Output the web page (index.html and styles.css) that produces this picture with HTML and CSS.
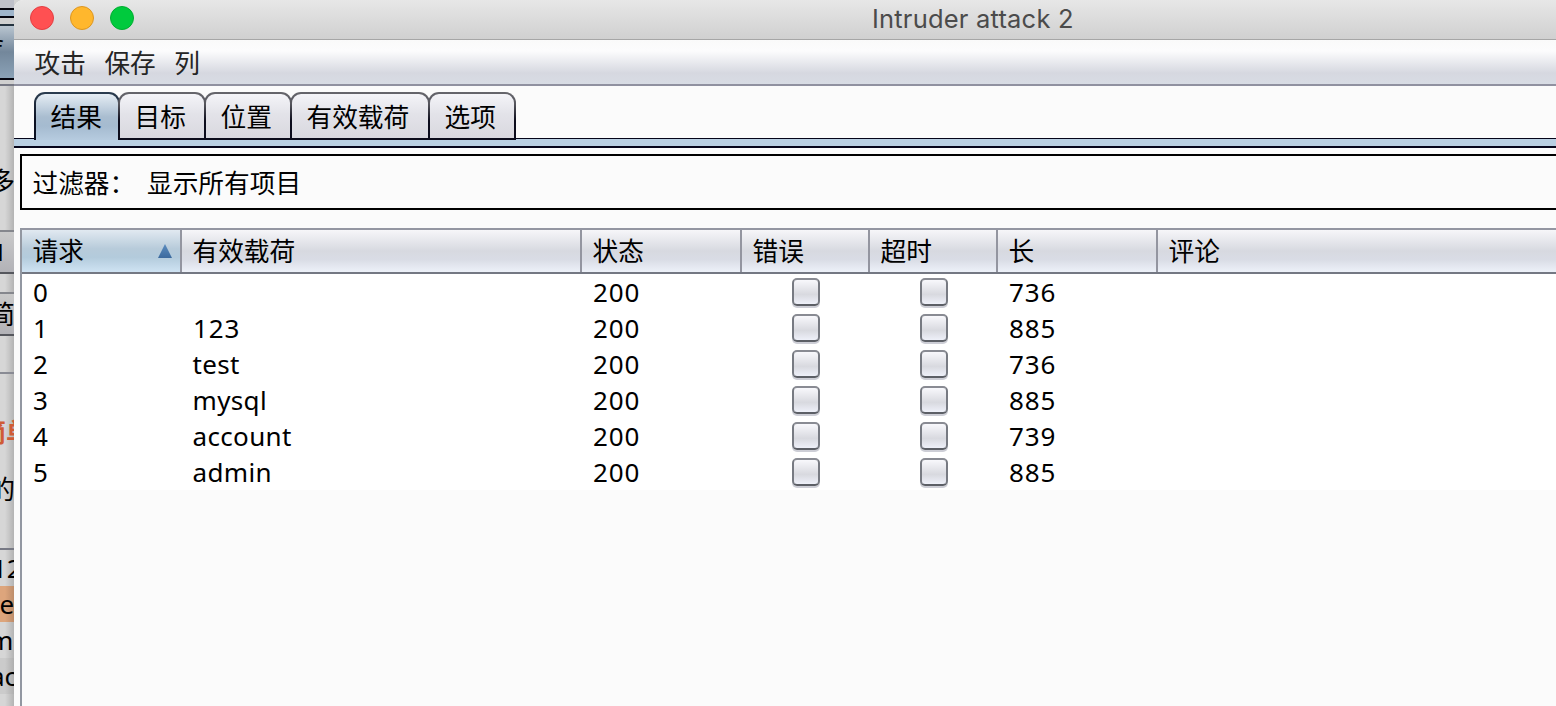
FILE: index.html
```html
<!DOCTYPE html>
<html lang="zh-CN">
<head>
<meta charset="utf-8">
<title>Intruder attack 2</title>
<link rel="stylesheet" href="styles.css">
</head>
<body>
<div class="desktop">
  <aside class="behind">
    <div class="b-top"></div>
    <div class="b-tab"><span>f</span></div>
    <div class="b-edge"></div>
    <div class="b-text b-more"><span>多</span></div>
    <div class="b-button b-one"><span>1</span></div>
    <div class="b-gap"></div>
    <div class="b-button b-simple"><span>简</span></div>
    <div class="b-space"></div>
    <div class="b-text b-heading"><span>简单</span></div>
    <div class="b-text b-de"><span>的</span></div>
    <div class="b-item b-i1"><span>12</span></div>
    <div class="b-item b-i2"><span>te</span></div>
    <div class="b-item b-i3"><span>m</span></div>
    <div class="b-item b-i4"><span>ac</span></div>
  </aside>
  <main class="window">
    <header class="titlebar">
      <div class="lights"><i class="light red"></i><i class="light yellow"></i><i class="light green"></i></div>
      <h1 class="title">Intruder attack 2</h1>
    </header>
    <nav class="menu"><span>攻击</span><span>保存</span><span>列</span></nav>
    <div class="tabs">
      <div class="tab active">结果</div>
      <div class="tab">目标</div>
      <div class="tab">位置</div>
      <div class="tab wide">有效载荷</div>
      <div class="tab">选项</div>
    </div>
    <div class="band"></div>
    <section class="filter"><span class="filter-label">过滤器：</span><span>显示所有项目</span></section>
    <section class="table">
      <div class="row head">
        <div class="cell sorted">请求<svg class="arrow" width="14" height="14" viewBox="0 0 14 14"><defs><linearGradient id="g" x1="0" y1="0" x2="0" y2="1"><stop offset="0" stop-color="#5b8cbf"/><stop offset="1" stop-color="#3c6a9e"/></linearGradient></defs><path d="M7 0L14 14H0Z" fill="url(#g)"/></svg></div>
        <div class="cell">有效载荷</div><div class="cell">状态</div><div class="cell">错误</div><div class="cell">超时</div><div class="cell">长</div><div class="cell">评论</div>
      </div>
      <div class="row"><div class="cell">0</div><div class="cell"></div><div class="cell">200</div><div class="cell check"><i class="box"></i></div><div class="cell check"><i class="box"></i></div><div class="cell">736</div><div class="cell"></div></div>
      <div class="row"><div class="cell">1</div><div class="cell">123</div><div class="cell">200</div><div class="cell check"><i class="box"></i></div><div class="cell check"><i class="box"></i></div><div class="cell">885</div><div class="cell"></div></div>
      <div class="row"><div class="cell">2</div><div class="cell word">test</div><div class="cell">200</div><div class="cell check"><i class="box"></i></div><div class="cell check"><i class="box"></i></div><div class="cell">736</div><div class="cell"></div></div>
      <div class="row"><div class="cell">3</div><div class="cell word">mysql</div><div class="cell">200</div><div class="cell check"><i class="box"></i></div><div class="cell check"><i class="box"></i></div><div class="cell">885</div><div class="cell"></div></div>
      <div class="row"><div class="cell">4</div><div class="cell word">account</div><div class="cell">200</div><div class="cell check"><i class="box"></i></div><div class="cell check"><i class="box"></i></div><div class="cell">739</div><div class="cell"></div></div>
      <div class="row"><div class="cell">5</div><div class="cell word">admin</div><div class="cell">200</div><div class="cell check"><i class="box"></i></div><div class="cell check"><i class="box"></i></div><div class="cell">885</div><div class="cell"></div></div>
    </section>
  </main>
</div>
</body>
</html>
```
FILE: styles.css
```css
* { box-sizing: border-box; }
body {
  margin: 0;
  overflow: hidden;
  font-family: "Noto Sans", "Noto Sans CJK SC", sans-serif;
  font-size: 26px;
  color: #000;
}
.desktop { display: flex; width: 1556px; height: 706px; background: #d3d3d3; }

/* Window behind, only its left sliver shows */
.behind {
  width: 14px;
  height: 706px;
  overflow: hidden;
  flex: none;
  background: linear-gradient(to right, transparent 5px, rgba(0,0,0,.16)), #d6d6d6;
}
.behind > div { display: flex; align-items: center; overflow: hidden; white-space: nowrap; }
.behind span { flex: none; line-height: 36px; }
.b-top {
  height: 26px;
  background: linear-gradient(#bfc1ca 0 8px, #05050f 8px 10px, #9fb5cb 10px 16px, #05050f 16px 18px, #d0d0d0 18px 24px, #25333f 24px 26px);
}
.b-tab { height: 52px; background: linear-gradient(#b9c5d0, #73879b 50%, #8ba2b7); }
.b-tab span { margin: -6px 0 0 -7px; }
.b-edge { height: 8px; background: linear-gradient(#05050f 0 2px, #d0d0d0 2px 6px, #777985 6px); }
.b-more { height: 144px; padding-top: 46px; }
.b-more span { margin-left: -11px; }
.b-button { height: 44px; background: linear-gradient(#cacaca, #b2b2b7); border-top: 2px solid #85878d; border-bottom: 2px solid #55575d; }
.b-one span { margin-left: -7px; font-size: 24px; }
.b-gap { height: 18px; }
.b-simple span { margin-left: -11px; }
.b-space { height: 38px; border-bottom: 2px solid #898b94; }
.b-heading { height: 116px; color: #cf5b35; font-weight: 700; }
.b-heading span { margin-left: -20px; }
.behind > .b-de { height: 80px; margin-top: -20px; align-items: flex-start; border-bottom: 2px solid #777984; }
.b-de span { margin-left: -11px; line-height: 38px; }
.b-item { height: 36px; }
.b-i1 span { margin-left: -8px; }
.b-i2 { background: linear-gradient(to right, #dda57c 5px, #bd8d6b); }
.b-i2 span { margin-left: -10px; }
.b-i3 span { margin-left: -11px; }
.b-i4 { background: linear-gradient(to right, #cbcbcb 5px, #afafaf); }
.b-i4 span { margin-left: -10px; }

.window { width: 1542px; height: 706px; flex: none; background: #fbfbfb; border-top-left-radius: 9px; overflow: hidden; }
.titlebar {
  height: 40px;
  display: grid;
  grid-template-columns: 858px 1fr;
  background: linear-gradient(#e7e7e7, #d0d0d0);
  border-bottom: 1px solid #a6a6a6;
}
.lights { display: flex; gap: 16px; padding: 6px 0 0 16px; }
.light { width: 24px; height: 24px; border-radius: 50%; border: 1px solid; }
.red { background: #ff5052; border-color: #e33e42; }
.yellow { background: #ffb72d; border-color: #dc9622; }
.green { background: #00ca3d; border-color: #00ad31; }
.title {
  margin: 0;
  font: 400 25.5px/38px Inter, sans-serif;
  letter-spacing: .2px;
  color: #4b4b4b;
  white-space: nowrap;
}
.menu {
  height: 46px;
  display: flex;
  gap: 18.5px;
  padding-left: 20.5px;
  font-size: 25.7px;
  line-height: 48px;
  color: #252525;
  background: linear-gradient(#fafafa, #fcfcfd 25%, #d6d8e0 75%, #d8dce4);
  border-bottom: 2px solid #9091a0;
}
.tabs { height: 54px; padding: 6px 0 0 20px; display: flex; background: linear-gradient(transparent 52px, #05051a 52px 53px, #b9cfe2 53px); }
.tab {
  width: 88px;
  height: 48px;
  flex: none;
  padding-left: 14.5px;
  font-size: 25.7px;
  line-height: 48px;
  margin-left: -2px;
  border: 2px solid transparent;
  border-radius: 11px 11px 0 0;
  background:
    linear-gradient(#f4f4f8, #e3e3e9 45%, #d9d8df) padding-box,
    linear-gradient(#66666c, #55555c 25%, #0c0c1c 60%) border-box;
  white-space: nowrap;
}
.tab.wide { width: 140px; }
.tab.active {
  width: 86px;
  margin-left: 0;
  border-bottom: 0;
  background:
    linear-gradient(#e5edf4, #a9bdd0 50%, #a5bbd0 70%, #b6cbdf) padding-box,
    linear-gradient(#2b3d50, #0a0f20 60%) border-box;
}
.band { height: 8px; background: #b9cfe2; border-bottom: 2px solid #05051a; }
.filter { height: 56px; margin: 6px 0 18px 6px; border: 2px solid #000; border-right: 0; padding-left: 10.5px; font-size: 25.7px; line-height: 55px; display: flex; }
.filter-label { width: 114.5px; }
.table { height: 478px; margin-left: 6px; border-left: 2px solid #9297a1; }
.row { height: 36px; display: grid; grid-template-columns: 160px 400px 160px 128px 128px 160px 1fr; background: #fff; }
.cell { padding-left: 11px; line-height: 37px; letter-spacing: .9px; white-space: nowrap; }
.word { letter-spacing: .35px; padding-left: 10.5px; }
.head { height: 46px; border-top: 2px solid #9496a2; border-bottom: 2px solid #747883; background: linear-gradient(#f6f6f9, #d7d9e0 50%, #d9dce5 70%, #edf1f9); }
.head .cell { height: 42px; padding: 2px 0 0 10.5px; font-size: 25.7px; line-height: 40px; letter-spacing: 0; border-right: 2px solid #9395a0; }
.head .cell:last-child { border-right: 0; }
.head .sorted { display: flex; justify-content: space-between; align-items: center; padding-right: 8px; background: linear-gradient(#e1e9f1, #b7cbda 45%, #b3cbdc 65%, #cfe3f3); }
.arrow { display: block; margin-top: -3px; }
.check { display: flex; justify-content: center; padding: 4px 0 0 0; }
.box {
  width: 28px;
  height: 28px;
  border-radius: 5px;
  border: 2px solid #777a82;
  border-top-color: #898b93;
  border-bottom-color: #5c5f66;
  background: linear-gradient(#f8f8fc, #d8d9df 60%, #eef0f9);
  box-shadow: 0 2px 0 #cdced6;
}
```
